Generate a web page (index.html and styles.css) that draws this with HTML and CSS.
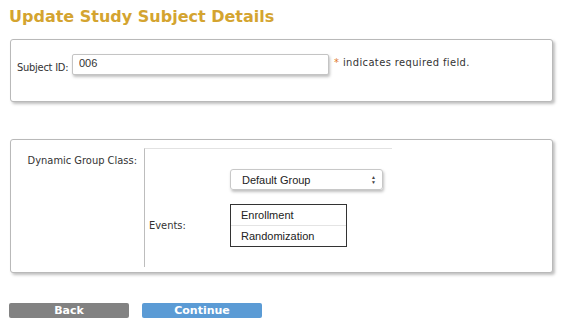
FILE: index.html
```html
<!DOCTYPE html>
<html lang="en">
<head>
    <meta charset="UTF-8">
    <title>Update Study Subject Details</title>
    <link rel="stylesheet" href="styles.css">
</head>
<body>
    <h1 class="title">Update Study Subject Details</h1>

    <div class="panel panel-id">
        <div class="id-row">
            <label class="field-label" for="subjectId">Subject ID:</label>
            <input class="text-input" id="subjectId" type="text" value="006">
            <span class="required"><span class="star">*</span> indicates required field.</span>
        </div>
    </div>

    <div class="panel panel-group">
        <div class="group-table">
            <div class="group-label">Dynamic Group Class:</div>
            <div class="group-cell">
                <div class="group-grid">
                    <div></div>
                    <div class="select-box">
                        <span>Default Group</span>
                        <span class="arrows">&#9650;<br>&#9660;</span>
                    </div>
                    <div class="events-label">Events:</div>
                    <ul class="events-list">
                        <li>Enrollment</li>
                        <li>Randomization</li>
                    </ul>
                </div>
            </div>
        </div>
    </div>

    <div class="buttons">
        <button class="btn btn-back">Back</button>
        <button class="btn btn-continue">Continue</button>
    </div>
</body>
</html>
```

FILE: styles.css
```css
body {
    margin: 0;
    padding: 0;
    background: #fff;
    font-family: 'DejaVu Sans Condensed', 'DejaVu Sans', sans-serif;
    font-size: 11px;
    color: #333;
}
.title {
    margin: 0;
    padding: 7px 0 0 9px;
    height: 32px;
    box-sizing: border-box;
    font-family: 'DejaVu Sans', Verdana, sans-serif;
    font-size: 16px;
    font-weight: bold;
    color: #d4a430;
}
.panel {
    margin: 0 10px 0 10px;
    border: 1px solid #b9b9b9;
    border-radius: 3px;
    box-shadow: 2px 2px 3px rgba(0, 0, 0, 0.25);
    background: #fff;
    box-sizing: border-box;
}
.panel-id {
    margin-top: 7px;
    height: 63px;
    padding: 14px 0 0 6px;
}
.id-row {
    display: flex;
    align-items: flex-start;
}
.field-label {
    margin-top: 7px;
    width: 55px;
    white-space: nowrap;
    letter-spacing: -0.25px;
}
.text-input {
    width: 257px;
    height: 21px;
    box-sizing: border-box;
    border: 1px solid #c4c4c4;
    border-radius: 2px;
    box-shadow: 1px 2px 3px rgba(0, 0, 0, 0.25);
    padding: 0 6px 4px;
    font-family: 'Liberation Sans', Arial, sans-serif;
    font-size: 11px;
    color: #333;
    outline: none;
}
.required {
    margin: 2px 0 0 5px;
    white-space: nowrap;
    letter-spacing: 0.4px;
}
.star {
    color: #e07a2a;
}
.panel-group {
    margin-top: 37px;
    height: 134px;
    padding-top: 8px;
}
.group-table {
    display: flex;
    height: 119px;
}
.group-label {
    width: 126px;
    padding: 6px 7px 0 0;
    text-align: right;
    white-space: nowrap;
}
.group-cell {
    width: 247px;
    border-left: 1px solid #bdbdbd;
    border-top: 1px solid #e2e2e2;
}
.group-grid {
    display: grid;
    grid-template-columns: 85px 153px;
    grid-template-rows: auto auto;
    padding-top: 20px;
    row-gap: 14px;
    align-items: center;
}
.select-box {
    height: 21px;
    box-sizing: border-box;
    border: 1px solid #c8c8c8;
    border-radius: 3px;
    box-shadow: 1px 2px 3px rgba(0, 0, 0, 0.25);
    display: flex;
    align-items: center;
    justify-content: space-between;
    padding: 0 6px 0 11px;
    font-family: 'Liberation Sans', Arial, sans-serif;
    font-size: 11px;
    color: #222;
}
.arrows {
    font-size: 5px;
    line-height: 5px;
    color: #444;
    text-align: center;
}
.events-label {
    padding-left: 4px;
}
.events-list {
    list-style: none;
    margin: 0;
    padding: 0;
    width: 117px;
    box-sizing: border-box;
    border: 1px solid #333;
    font-family: 'Liberation Sans', Arial, sans-serif;
    font-size: 11px;
    color: #222;
}
.events-list li {
    height: 20px;
    line-height: 20px;
    padding-left: 10px;
}
.events-list li + li {
    border-top: 1px solid #e4e4e4;
}
.buttons {
    display: flex;
    gap: 13px;
    margin: 30px 0 0 9px;
}
.btn {
    width: 120px;
    height: 15px;
    border: 0;
    border-radius: 2px;
    padding: 0;
    color: #fff;
    font-family: 'DejaVu Sans', Verdana, sans-serif;
    font-size: 11px;
    font-weight: bold;
    line-height: 15px;
}
.btn-back {
    background: #828282;
}
.btn-continue {
    background: #5b9bd5;
}
```
